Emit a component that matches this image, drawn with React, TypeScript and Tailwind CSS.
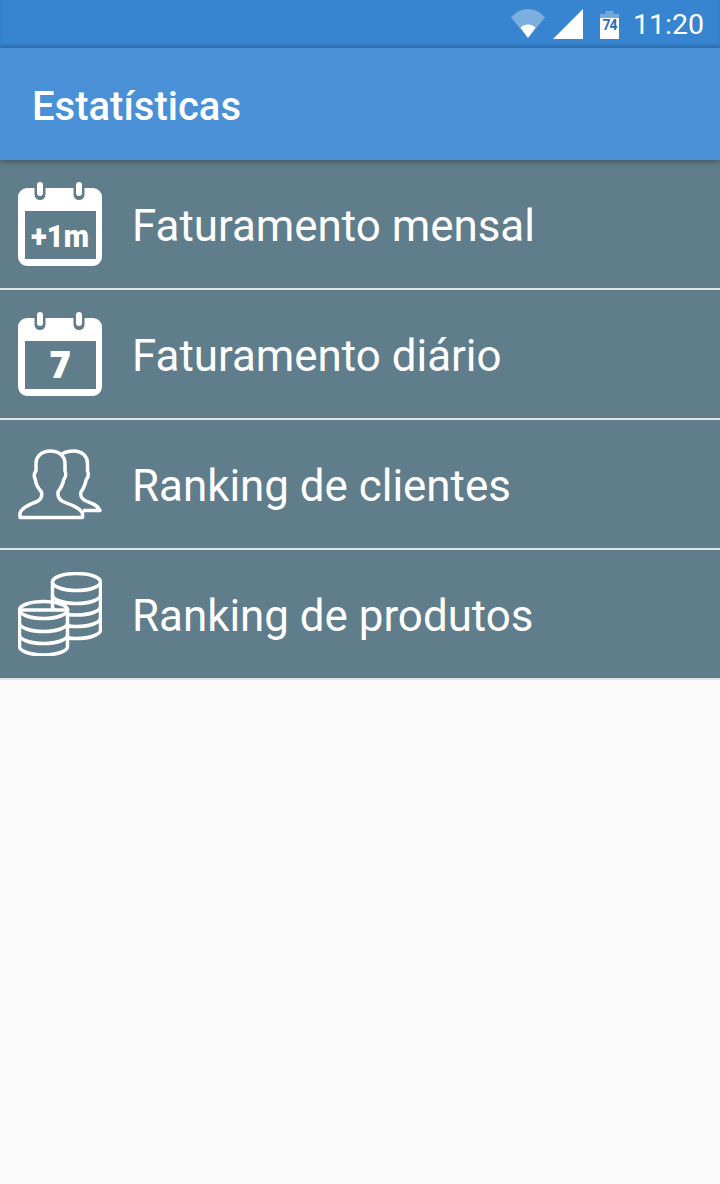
function CalendarIcon({ label, size, y, font, fit }: { label: string; size: number; y: number; font: string; fit?: number }) {
  return (
    <svg width="84" height="84" viewBox="0 0 84 84" className="shrink-0">
      <path
        fillRule="evenodd"
        fill="#fff"
        d="M9 6h66a9 9 0 0 1 9 9v60a9 9 0 0 1-9 9H9a9 9 0 0 1-9-9V15a9 9 0 0 1 9-9ZM7 29v48h71V29Z"
      />
      <rect x="16.500" y="-2" width="11" height="20" rx="5.500" fill="#607d8b" />
      <rect x="55.500" y="-2" width="11" height="20" rx="5.500" fill="#607d8b" />
      <rect x="19" y="0" width="6" height="14" rx="3" fill="#fff" />
      <rect x="58" y="0" width="6" height="14" rx="3" fill="#fff" />
      <text
        x="42"
        y={y}
        textAnchor="middle"
        fill="#fff"
        fontSize={size}
        fontWeight="900"
        fontFamily={font}
        textLength={fit}
        lengthAdjust={fit ? "spacingAndGlyphs" : undefined}
      >
        {label}
      </text>
    </svg>
  )
}

function PeopleIcon() {
  return (
    <svg width="84" height="84" viewBox="0 0 84 84" fill="none" stroke="#fff" strokeWidth="3.500" strokeLinejoin="round" className="shrink-0">
      <path d="M2 75.500V71C3.500 66 10 63 18 60C23 58 24.500 55 23.500 50C20 46 17.500 43 17.500 38C15 33 17 30 18 29V22C18 13 25 9 32.500 9C40 9 47 13 47 22V29C48 31 48 35 45.500 38C45 43 42 47 40 50C39.500 55 41 58 46 60C54 63 62 66 64.500 71V75.500Z" />
      <path d="M44 12C48 9.500 52 9 56 9C63 9 69.500 13 69.500 22V29C71 32 70.500 35 68 38C67.500 43 65 47 63 50C62 55 64 57 68 59C74 61.500 80 63 82 68.500H65" />
    </svg>
  )
}

function CoinsIcon() {
  return (
    <svg width="84" height="84" viewBox="0 0 84 84" fill="none" stroke="#fff" strokeWidth="3.500" className="shrink-0">
      <ellipse cx="58.500" cy="10" rx="24" ry="8.500" />
      <path d="M34.500 10V58A24 8.500 0 0 0 82.500 58V10" />
      <path d="M34.500 23A24 8.500 0 0 0 82.500 23" />
      <path d="M34.500 34.500A24 8.500 0 0 0 82.500 34.500" />
      <path d="M34.500 46A24 8.500 0 0 0 82.500 46" />
      <path d="M1.500 38V74.500A24 8.500 0 0 0 49.500 74.500V38Z" fill="#607d8b" />
      <ellipse cx="25.500" cy="38" rx="24" ry="8.500" />
      <path d="M1.500 51A24 8.500 0 0 0 49.500 51" />
      <path d="M1.500 63A24 8.500 0 0 0 49.500 63" />
    </svg>
  )
}

const rows = [
  { label: "Faturamento mensal", icon: <CalendarIcon label="+1m" size={31} y={65} font="Roboto, sans-serif" fit={58} /> },
  { label: "Faturamento diário", icon: <CalendarIcon label="7" size={37} y={66} font="'Open Sans', sans-serif" /> },
  { label: "Ranking de clientes", icon: <PeopleIcon /> },
  { label: "Ranking de produtos", icon: <CoinsIcon /> },
]

export default function App() {
  return (
    <div className="flex h-[1184px] w-[720px] flex-col overflow-hidden bg-[#fafafa] font-['Roboto',sans-serif]">
      {/* status bar */}
      <div className="flex h-[48px] shrink-0 items-center justify-end bg-[#3784d0] pr-[16px] shadow-[inset_0_-3px_3px_rgba(0,0,0,0.12)]">
        <svg width="34" height="29" viewBox="0 0 34 29" className="mr-[8px] mt-[-1px]">
          <path d="M0 8.500C9.500 -2.800 24.500 -2.800 34 8.500L17 29Z" fill="#fff" fillOpacity="0.35" />
          <path d="M9.500 18.500C13.500 14.500 20.500 14.500 24.500 18.500L17 29Z" fill="#fff" />
        </svg>
        <svg width="30" height="30" viewBox="0 0 30 30" className="mr-[17px] mt-[-1px]">
          <path d="M0 30L30 0V30Z" fill="#fff" />
        </svg>
        <div className="relative mr-[14px] mt-[1px] h-[28px] w-[19px]">
          <svg width="19" height="28" viewBox="0 0 19 28">
            <path d="M5.500 0H13.500V3H19V28H0V3H5.500Z" fill="#fff" fillOpacity="0.3" />
            <path d="M0 7H19V28H0Z" fill="#fff" />
          </svg>
          <span className="absolute inset-x-0 top-[5px] text-center text-[14px] leading-[18px] font-bold tracking-[-1px] text-[#2c6fb5]">74</span>
        </div>
        <span className="mt-[2px] text-[28.500px] leading-[32px] text-white">11:20</span>
      </div>

      {/* app bar */}
      <div className="relative z-10 flex h-[112px] shrink-0 items-center bg-[#4a90d6] pl-[32px] pt-[6px] shadow-[0_2px_5px_rgba(0,0,0,0.3)]">
        <h1 className="text-[40px] leading-[46px] font-medium text-white">Estatísticas</h1>
      </div>

      {/* menu */}
      <div className="flex flex-col">
        {rows.map((row) => (
          <div key={row.label} className="flex h-[130px] items-center gap-[30px] border-b-2 border-[#e0e5e8] bg-[#607d8b] pl-[18px]">
            {row.icon}
            <span className="pt-[4px] text-[43.900px] leading-[52px] text-white">{row.label}</span>
          </div>
        ))}
      </div>
    </div>
  )
}
